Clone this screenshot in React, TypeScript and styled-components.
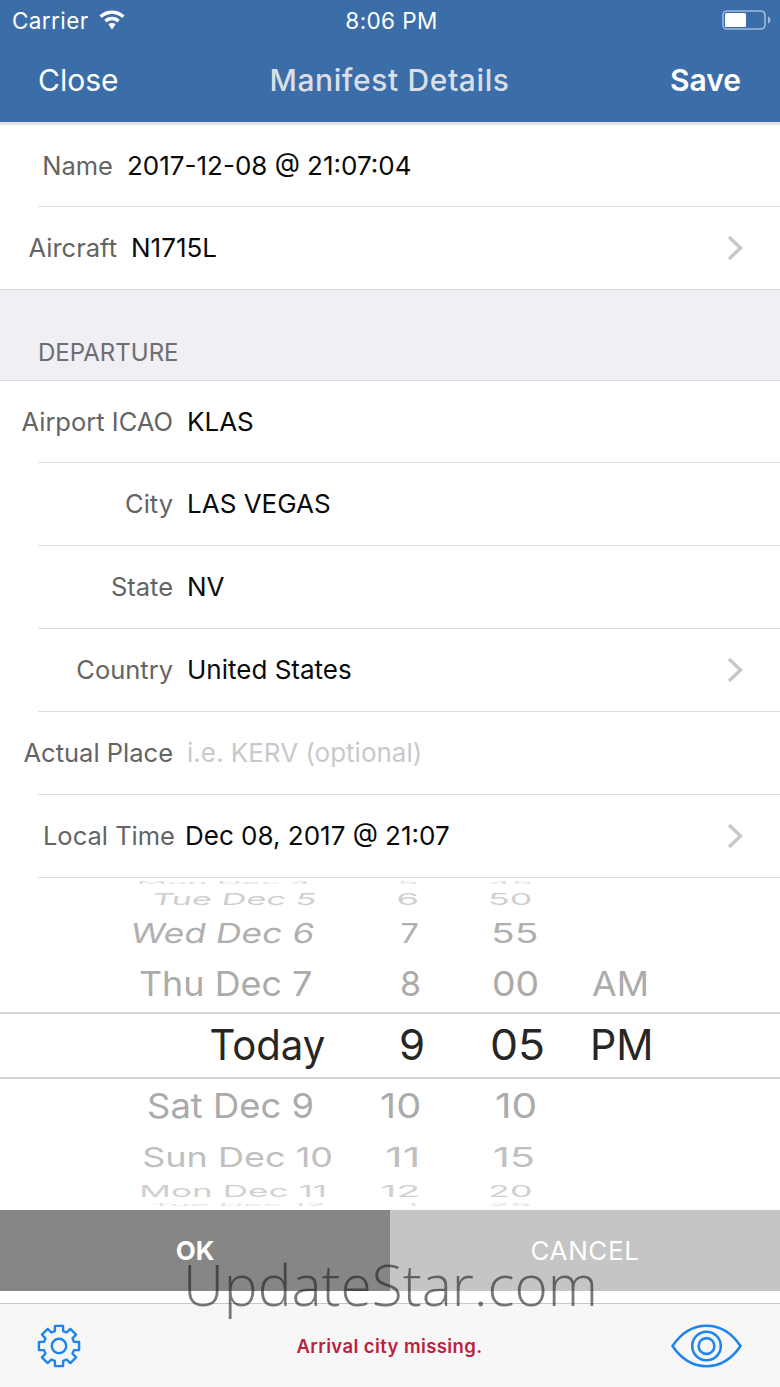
import React from "react";
import styled, { createGlobalStyle } from "styled-components";

const Global = createGlobalStyle`
  html, body { margin: 0; padding: 0; background: #fff; }
  * { box-sizing: border-box; }
  body { font-family: Inter, "Liberation Sans", sans-serif; }
`;

const Page = styled.div`
  position: relative;
  width: 780px;
  height: 1387px;
  overflow: hidden;
  display: flex;
  flex-direction: column;
  background: #fff;
`;

const Header = styled.header`
  height: 122px;
  background: #3b6ea8;
  color: #fff;
  flex: none;
`;

const StatusBar = styled.div`
  height: 40px;
  display: grid;
  grid-template-columns: 1fr auto 1fr;
  align-items: center;
  padding: 0 9px 0 12px;
  font-size: 22.5px;
  letter-spacing: 0.4px;
`;

const StatusLeft = styled.div`
  display: flex;
  align-items: center;
  gap: 10px;
`;

const StatusRight = styled.div`
  display: flex;
  justify-content: flex-end;
`;

const NavBar = styled.div`
  height: 82px;
  padding: 0 39px 3px 38px;
  display: grid;
  grid-template-columns: 1fr auto 1fr;
  align-items: center;
  font-size: 30px;
`;

const NavTitle = styled.div`
  color: #dadfe6;
  font-weight: 500;
  letter-spacing: 0.6px;
`;

const NavSave = styled.div`
  justify-self: end;
  font-weight: 600;
`;

const HeaderEdge = styled.div`
  height: 3px;
  flex: none;
  background: #e4e4e4;
`;

const Row = styled.div<{ $h?: number }>`
  height: ${(p) => p.$h ?? 82}px;
  flex: none;
  display: flex;
  align-items: center;
  font-size: 26px;
  padding-right: 37px;
  padding-bottom: 1px;
  background: #fff;
`;

const Label = styled.div<{ $w: number; $gap?: number }>`
  width: ${(p) => p.$w}px;
  margin-right: ${(p) => p.$gap ?? 14}px;
  flex: none;
  font-size: 25.5px;
  text-align: right;
  white-space: nowrap;
  color: #646464;
`;

const Value = styled.div<{ $placeholder?: boolean }>`
  flex: 1;
  white-space: nowrap;
  color: ${(p) => (p.$placeholder ? "#c9c9cc" : "#0a0a0a")};
`;

const Separator = styled.div<{ $full?: boolean }>`
  height: 1px;
  flex: none;
  margin-left: ${(p) => (p.$full ? 0 : 38)}px;
  background: #dcdcde;
`;

const SectionHeader = styled.div`
  height: 90px;
  flex: none;
  background: #efeff4;
  color: #6d6d72;
  font-size: 24px;
  padding: 0 38px 13px;
  display: flex;
  align-items: flex-end;
`;

const Picker = styled.div`
  height: 332px;
  flex: none;
  display: flex;
  flex-direction: column;
  overflow: hidden;
`;

const Wheel = styled.div<{ $h: number; $selected?: boolean; $color: string; $size: number }>`
  height: ${(p) => p.$h}px;
  flex: none;
  display: grid;
  grid-template-columns: 340px 85px 165px 1fr;
  grid-template-rows: minmax(0, 1fr);
  align-items: center;
  overflow: hidden;
  color: ${(p) => p.$color};
  font-size: ${(p) => p.$size}px;
  line-height: 1;
  background: #fff;
  ${(p) => (p.$selected ? "border-top: 2px solid #d4d4d4; border-bottom: 2px solid #d4d4d4; padding-bottom: 1px;" : "")}
`;

const Cell = styled.div<{ $left?: number; $right?: number }>`
  white-space: nowrap;
  padding-left: ${(p) => p.$left ?? 0}px;
  padding-right: ${(p) => p.$right ?? 0}px;
  text-align: ${(p) => (p.$left !== undefined ? "left" : "right")};
`;

const CellText = styled.span<{ $y: number; $skew?: number; $sx?: number; $origin: string }>`
  display: inline-block;
  transform-origin: ${(p) => p.$origin} center;
  transform: scaleY(${(p) => p.$y}) scaleX(${(p) => p.$sx ?? 1}) skewX(${(p) => p.$skew ?? 0}deg);
`;

const Buttons = styled.div`
  height: 81px;
  flex: none;
  display: grid;
  grid-template-columns: 390px 390px;
`;

const ActionButton = styled.div<{ $primary?: boolean }>`
  display: flex;
  align-items: center;
  justify-content: center;
  color: #fff;
  font-size: 26px;
  background: ${(p) => (p.$primary ? "#868686" : "#c5c5c5")};
  font-weight: ${(p) => (p.$primary ? 700 : 400)};
  letter-spacing: ${(p) => (p.$primary ? 0 : 0.6)}px;
`;

const Spacer = styled.div`
  flex: 1;
  background: #fff;
`;

const Footer = styled.footer`
  height: 84px;
  flex: none;
  border-top: 1px solid #c8c8c8;
  background: #f7f7f7;
  display: grid;
  grid-template-columns: 1fr auto 1fr;
  align-items: center;
  padding: 0 38px 0 37px;
`;

const FooterMessage = styled.div`
  color: #bd1f3d;
  font-size: 18.5px;
  font-weight: 600;
  letter-spacing: 0.4px;
`;

const FooterEnd = styled.div`
  display: flex;
  justify-content: flex-end;
`;

const Watermark = styled.div`
  position: absolute;
  left: 183px;
  top: 1244px;
  font-family: "Open Sans", sans-serif;
  font-weight: 300;
  font-size: 56.8px;
  line-height: 80px;
  white-space: nowrap;
  color: rgba(30, 30, 30, 0.6);
`;

const Chevron = () => (
  <svg width="16" height="26" viewBox="0 0 16 26" fill="none">
    <path d="M2 2 L13.5 13 L2 24" stroke="#c7c7cc" strokeWidth="3.4" />
  </svg>
);

const Wifi = () => (
  <svg width="26" height="20" viewBox="0 0 26 20" fill="#fff">
    <path d="M13 0.5C8 0.5 3.7 2.4 0.4 5.6L2.9 8.1C5.6 5.5 9.1 4 13 4s7.4 1.5 10.1 4.1l2.5-2.5C22.3 2.4 18 0.5 13 0.5z" />
    <path d="M13 6.8c-3 0-5.7 1.2-7.7 3.1l2.5 2.5c1.4-1.3 3.2-2.1 5.2-2.1s3.8.8 5.2 2.1l2.5-2.5C18.7 8 16 6.8 13 6.8z" />
    <path d="M13 13c-1.4 0-2.6.5-3.5 1.4L13 19.5l3.5-5.1C15.6 13.5 14.4 13 13 13z" />
  </svg>
);

const Battery = () => (
  <svg width="49" height="20" viewBox="0 0 49 20">
    <rect x="1" y="1" width="42" height="18" rx="4" fill="none" stroke="#9fbcdc" strokeWidth="1.6" />
    <rect x="3" y="3" width="21" height="14" rx="1.5" fill="#fff" />
    <path d="M46 6.5c1.6.5 2.4 2 2.4 3.5s-.8 3-2.4 3.5z" fill="#9fbcdc" />
  </svg>
);

const gearPoints = (() => {
  const pts: string[] = [];
  const cx = 22;
  const cy = 22;
  const rO = 20.5;
  const rI = 15.5;
  for (let i = 0; i < 8; i++) {
    const a = (i * Math.PI) / 4 - Math.PI / 2;
    const at = (r: number, d: number) => {
      const t = a + d;
      return `${(cx + r * Math.cos(t)).toFixed(2)},${(cy + r * Math.sin(t)).toFixed(2)}`;
    };
    pts.push(at(rI, -0.27), at(rO, -0.2), at(rO, 0.2), at(rI, 0.27));
  }
  return pts.join(" ");
})();

const Gear = () => (
  <svg width="44" height="44" viewBox="0 0 44 44" fill="none" stroke="#1f84ee" strokeWidth="2.4" strokeLinejoin="round">
    <polygon points={gearPoints} />
    <circle cx="22" cy="22" r="7.2" />
  </svg>
);

const Eye = () => (
  <svg width="71" height="44" viewBox="0 0 72 44" fill="none" stroke="#1f84ee" strokeWidth="2.6">
    <path d="M1.5 22 C11 8 22 1.5 36 1.5 S61 8 70.5 22 C61 36 50 42.5 36 42.5 S11 36 1.5 22 Z" />
    <circle cx="36" cy="22" r="14.5" />
    <circle cx="36" cy="22" r="8" />
  </svg>
);

type Part = [string, number, number?];

type WheelRow = {
  h: number;
  size: number;
  color: string;
  y: number;
  skew?: number;
  selected?: boolean;
  date: Part;
  hour: Part;
  minute: Part;
  ampm?: Part;
};

const wheelRows: WheelRow[] = [
  { h: 9, size: 26, color: "#dcdcdc", y: 0.14, date: ["Mon Dec 4", 312, 1.3], hour: ["5", 419, 1.4], minute: ["45", 488, 1.38] },
  { h: 23, size: 26, color: "#cfcfcf", y: 0.63, skew: -6, date: ["Tue Dec 5", 317, 1.32], hour: ["6", 419, 1.4], minute: ["50", 488, 1.38] },
  { h: 46, size: 30, color: "#b0b0b0", y: 0.92, skew: -8, date: ["Wed Dec 6", 315, 1.18], hour: ["7", 419, 1.1], minute: ["55", 491, 1.3] },
  { h: 56, size: 34, color: "#ababab", y: 1, date: ["Thu Dec 7", 312, 1.055], hour: ["8", 421], minute: ["00", 492, 1.1], ampm: ["AM", 592, 1.05] },
  { h: 67, size: 42, color: "#262626", y: 1, selected: true, date: ["Today", 325, 0.955], hour: ["9", 426], minute: ["05", 490, 1.06], ampm: ["PM", 590, 0.98] },
  { h: 53, size: 34, color: "#ababab", y: 1, date: ["Sat Dec 9", 314, 1.07], hour: ["10", 421, 1.17], minute: ["10", 495, 1.2] },
  { h: 50, size: 30, color: "#c0c0c0", y: 0.92, date: ["Sun Dec 10", 333, 1.2], hour: ["11", 420, 1.45], minute: ["15", 493, 1.38] },
  { h: 18, size: 26, color: "#d0d0d0", y: 0.63, date: ["Mon Dec 11", 327, 1.35], hour: ["12", 420, 1.52], minute: ["20", 488, 1.38] },
  { h: 10, size: 26, color: "#e0e0e0", y: 0.12, date: ["Tue Dec 12", 326, 1.3], hour: ["1", 419, 1.4], minute: ["25", 488, 1.38] },
];

export default function App() {
  return (
    <>
      <Global />
      <Page>
        <Header>
          <StatusBar>
            <StatusLeft>
              <span>Carrier</span>
              <Wifi />
            </StatusLeft>
            <div>8:06 PM</div>
            <StatusRight>
              <Battery />
            </StatusRight>
          </StatusBar>
          <NavBar>
            <div>Close</div>
            <NavTitle>Manifest Details</NavTitle>
            <NavSave>Save</NavSave>
          </NavBar>
        </Header>
        <HeaderEdge />

        <Row $h={81}>
          <Label $w={113}>Name</Label>
          <Value>2017-12-08 @ 21:07:04</Value>
        </Row>
        <Separator />
        <Row>
          <Label $w={117}>Aircraft</Label>
          <Value>N1715L</Value>
          <Chevron />
        </Row>
        <Separator $full />
        <SectionHeader>DEPARTURE</SectionHeader>
        <Separator $full />
        <Row $h={81}>
          <Label $w={173}>Airport ICAO</Label>
          <Value>KLAS</Value>
        </Row>
        <Separator />
        <Row>
          <Label $w={173}>City</Label>
          <Value>LAS VEGAS</Value>
        </Row>
        <Separator />
        <Row>
          <Label $w={173}>State</Label>
          <Value>NV</Value>
        </Row>
        <Separator />
        <Row>
          <Label $w={173}>Country</Label>
          <Value>United States</Value>
          <Chevron />
        </Row>
        <Separator />
        <Row>
          <Label $w={173}>Actual Place</Label>
          <Value $placeholder>i.e. KERV (optional)</Value>
        </Row>
        <Separator />
        <Row>
          <Label $w={175} $gap={10}>Local Time</Label>
          <Value>Dec 08, 2017 @ 21:07</Value>
          <Chevron />
        </Row>
        <Separator />

        <Picker>
          {wheelRows.map((r) => (
            <Wheel key={r.date[0]} $h={r.h} $size={r.size} $color={r.color} $selected={r.selected}>
              <Cell $right={340 - r.date[1]}>
                <CellText $origin="right" $y={r.y} $skew={r.skew} $sx={r.date[2]}>{r.date[0]}</CellText>
              </Cell>
              <Cell $right={425 - r.hour[1]}>
                <CellText $origin="right" $y={r.y} $sx={r.hour[2]}>{r.hour[0]}</CellText>
              </Cell>
              <Cell $left={r.minute[1] - 425}>
                <CellText $origin="left" $y={r.y} $sx={r.minute[2]}>{r.minute[0]}</CellText>
              </Cell>
              {r.ampm ? (
                <Cell $left={r.ampm[1] - 590}>
                  <CellText $origin="left" $y={r.y} $sx={r.ampm[2]}>{r.ampm[0]}</CellText>
                </Cell>
              ) : (
                <div />
              )}
            </Wheel>
          ))}
        </Picker>

        <Buttons>
          <ActionButton $primary>OK</ActionButton>
          <ActionButton>CANCEL</ActionButton>
        </Buttons>
        <Spacer />
        <Footer>
          <Gear />
          <FooterMessage>Arrival city missing.</FooterMessage>
          <FooterEnd>
            <Eye />
          </FooterEnd>
        </Footer>
        <Watermark>UpdateStar.com</Watermark>
      </Page>
    </>
  );
}
